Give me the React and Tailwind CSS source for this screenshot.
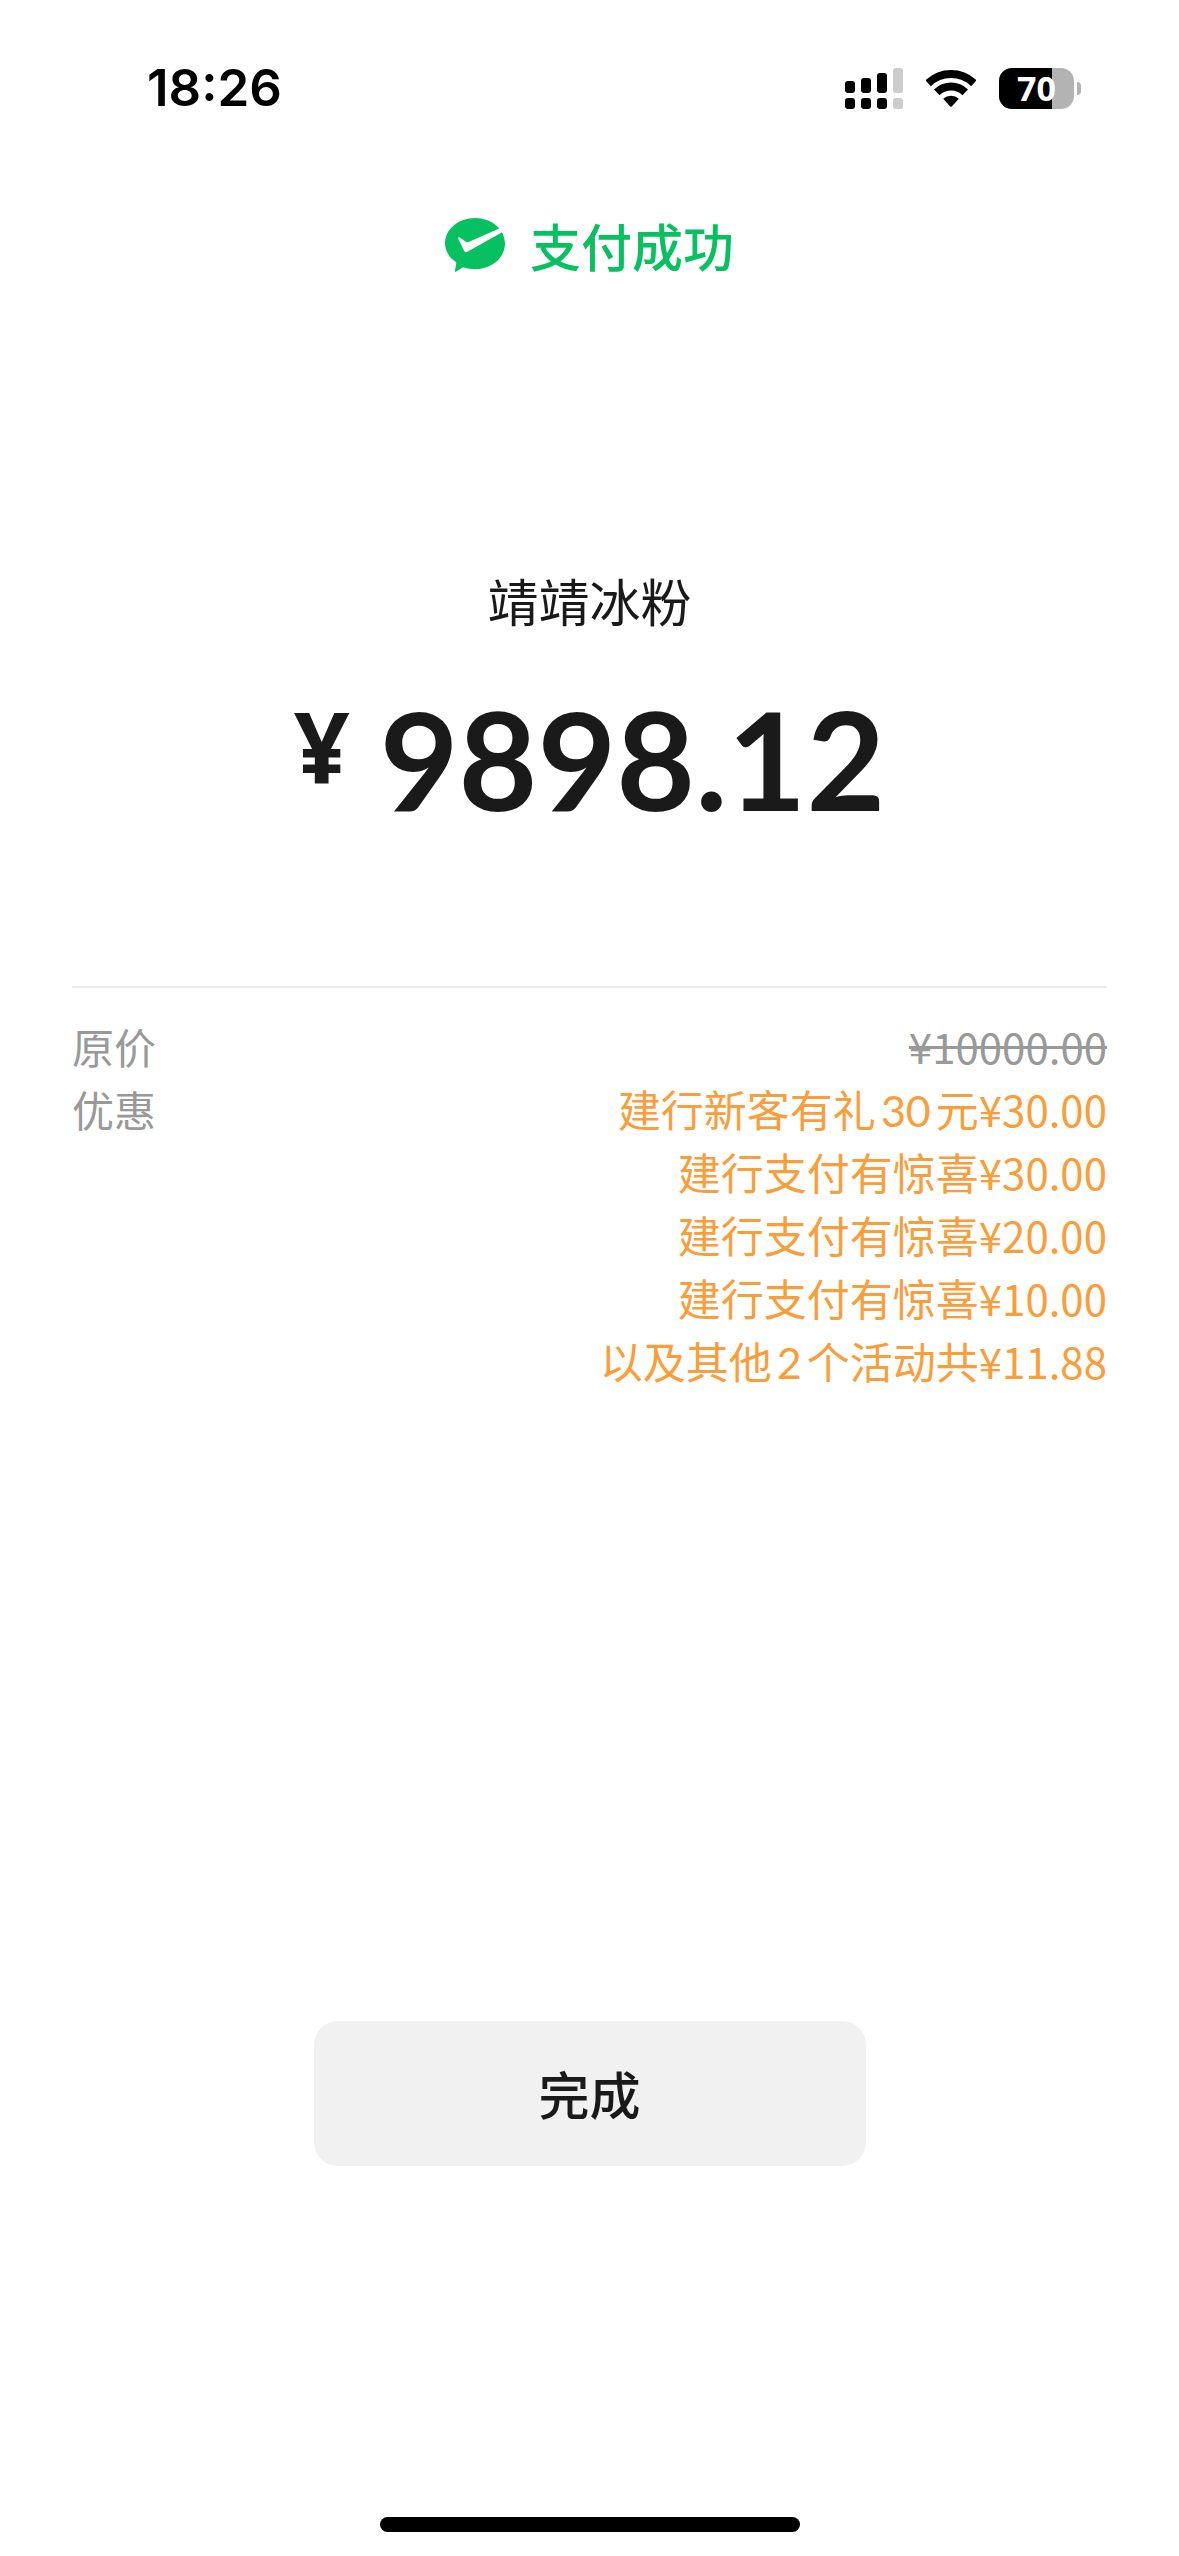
import clsx from 'clsx';

const discounts = [
    { id: 1, name: ['建行新客有礼', '30', '元'], price: '¥30.00' },
    { id: 2, name: ['建行支付有惊喜'], price: '¥30.00' },
    { id: 3, name: ['建行支付有惊喜'], price: '¥20.00' },
    { id: 4, name: ['建行支付有惊喜'], price: '¥10.00' },
    { id: 5, name: ['以及其他', '2', '个活动共'], price: '¥11.88' },
];

function SignalIcon() {
    return (
        <svg width="58" height="41" viewBox="0 0 58 41" aria-hidden="true">
            <rect x="0" y="13" width="10" height="12" rx="3" />
            <rect x="16" y="10" width="10" height="15" rx="3" />
            <rect x="32" y="5" width="10" height="20" rx="3" />
            <rect x="48" y="0" width="10" height="25" rx="3" fill="#cccccc" />
            <rect x="0" y="30" width="10" height="11" rx="3" />
            <rect x="16" y="30" width="10" height="11" rx="3" />
            <rect x="32" y="30" width="10" height="11" rx="3" />
            <rect x="48" y="30" width="10" height="11" rx="3" fill="#cccccc" />
        </svg>
    );
}

function WifiIcon() {
    return (
        <svg width="50" height="37" viewBox="0 0 50 37" aria-hidden="true">
            <path d="M2.1 13.3 A33 33 0 0 1 47.9 13.3" fill="none" stroke="#000" strokeWidth="8" />
            <path d="M10.8 22.3 A20.5 20.5 0 0 1 39.2 22.3" fill="none" stroke="#000" strokeWidth="8" />
            <path d="M17.2 28.8 A11.5 11.5 0 0 1 32.8 28.8 L25.8 36.4 Q25 37.2 24.2 36.4 Z" />
        </svg>
    );
}

function Battery({ level }) {
    return (
        <div className="flex items-center gap-[3px]">
            <div className="relative h-[41px] w-[75px] rounded-[13px] bg-[#b3b3b3]">
                <div className="h-full rounded-l-[13px] bg-black" style={{ width: `${level}%` }}></div>
                <span className="absolute inset-0 flex items-center justify-center font-['Noto_Sans',sans-serif] text-[34px] leading-[40px] font-bold text-white">
                    {level}
                </span>
            </div>
            <div className="h-[13px] w-[4px] rounded-r-full bg-[#b3b3b3]"></div>
        </div>
    );
}

function StatusBar() {
    return (
        <header className="flex items-center justify-between pt-[57px] pr-[98px] pl-[147px] font-['Inter',sans-serif] leading-[62px] text-black">
            <time className="text-[51px] font-semibold">18:26</time>
            <div className="flex items-center gap-[23px]">
                <SignalIcon />
                <WifiIcon />
                <Battery level={70} />
            </div>
        </header>
    );
}

function PayIcon() {
    return (
        <svg width="60" height="54" viewBox="0 0 60 54" aria-hidden="true">
            <path
                d="M30 0 C46.6 0 60 11.4 60 25.6 C60 39.8 46.6 51.2 30 51.2 C26.2 51.2 22.5 50.6 19.2 49.5 C18.5 49.3 17.9 49.4 17.3 49.8 L11.2 53.6 C10.4 54.1 9.7 53.6 9.9 52.7 L11.2 45.8 C11.4 44.9 11.2 44.3 10.5 43.7 C4 39.2 0 32.8 0 25.6 C0 11.4 13.4 0 30 0 Z"
                fill="#07c160"
            />
            <path
                d="M13.2 20.4 C12.9 19.4 13.9 18.8 14.7 19.4 L20.6 23.6 C21.6 24.2 22.5 24.4 23.6 23.9 L54.2 10.4 L58 13.7 L21.9 34 C20.9 34.6 19.8 34.3 19.3 33.3 L13.4 21 Z"
                fill="#fff"
            />
        </svg>
    );
}

function DiscountName({ parts }) {
    return parts.map((part) => (
        <span
            key={part}
            className={clsx(
                'text-[43px] leading-none',
                /^\d+$/.test(part) && "mx-[5px] font-['Lato',sans-serif]"
            )}
        >
            {part}
        </span>
    ));
}

export default function App() {
    return (
        <div className="flex min-h-screen flex-col bg-white font-['Noto_Sans_CJK_SC',sans-serif] text-[#1a1a1a]">
            <StatusBar />

            <main className="flex flex-1 flex-col px-[72px]">
                {/* Payment result */}
                <h1 className="mt-[90px] flex items-center justify-center gap-[25px] text-[51px] leading-[72px] font-medium text-[#07c160]">
                    <PayIcon />
                    支付成功
                </h1>

                {/* Merchant and amount */}
                <section className="mt-[283px] flex flex-col items-center">
                    <h2 className="text-[51px] leading-[72px]">靖靖冰粉</h2>
                    <p className="mt-[39px] flex items-start gap-[30px] font-bold">
                        <span className="font-['Noto_Sans',sans-serif] text-[98px] leading-[142px]">¥</span>
                        <span className="font-['Lato',sans-serif] text-[136px] leading-[168px]">9898.12</span>
                    </p>
                </section>

                {/* Price details */}
                <dl className="mt-[143px] border-t-2 border-[#ededed] pt-[26px] text-[42px] leading-[63px]">
                    <div className="flex justify-between text-[#999999]">
                        <dt>原价</dt>
                        <dd>
                            <del className="decoration-3">¥10000.00</del>
                        </dd>
                    </div>
                    <div className="flex justify-between">
                        <dt className="text-[#999999]">优惠</dt>
                        <dd className="text-right text-[#fa9d3b]">
                            {discounts.map((item) => (
                                <div key={item.id}>
                                    <DiscountName parts={item.name} />
                                    <span>{item.price}</span>
                                </div>
                            ))}
                        </dd>
                    </div>
                </dl>
            </main>

            <footer className="flex flex-col items-center pb-[24px]">
                <button
                    type="button"
                    className="h-[145px] w-[552px] cursor-pointer rounded-3xl bg-[#f1f1f1] text-[51px] font-medium active:bg-[#e5e5e5]"
                >
                    完成
                </button>
                {/* Home indicator */}
                <div className="mt-[351px] h-[15px] w-[420px] rounded-full bg-black"></div>
            </footer>
        </div>
    );
}
